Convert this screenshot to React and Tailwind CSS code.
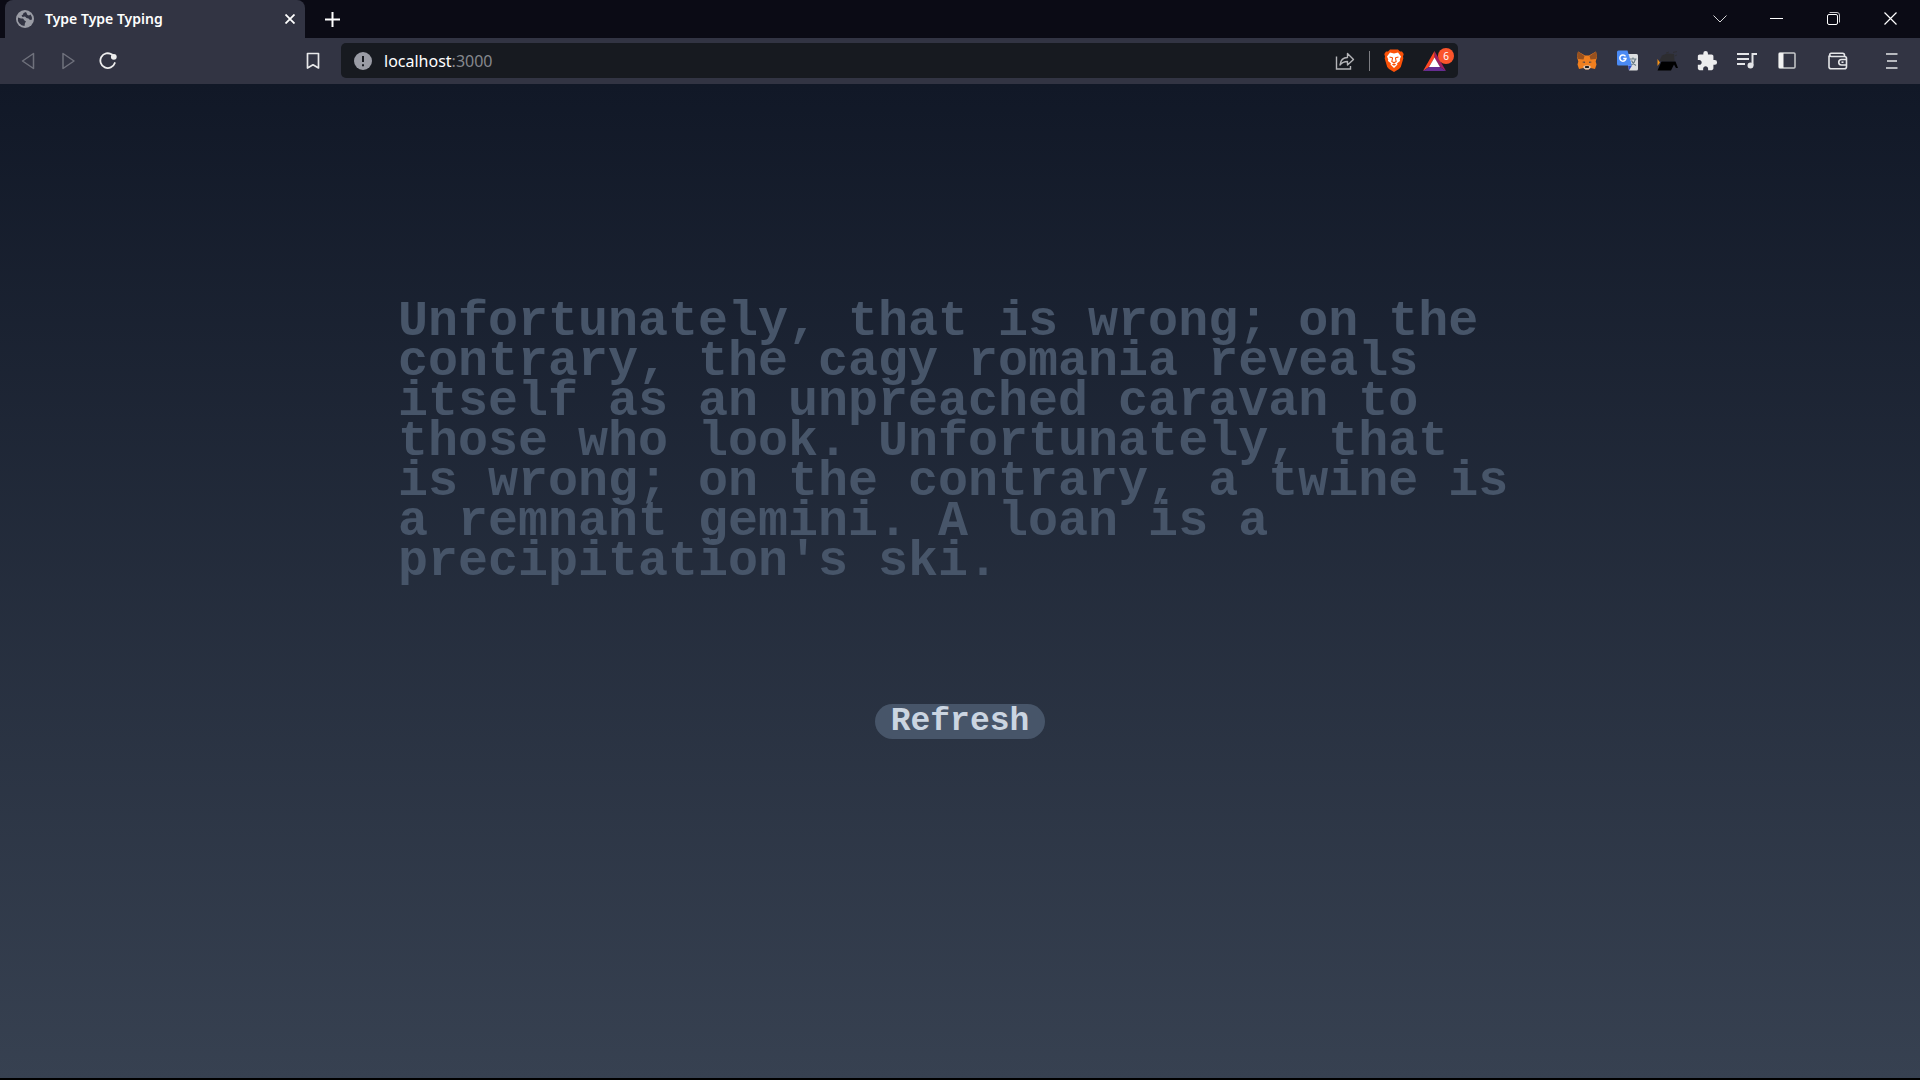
import React from 'react';

const PASSAGE =
  "Unfortunately, that is wrong; on the contrary, the cagy romania reveals itself as an unpreached caravan to those who look. Unfortunately, that is wrong; on the contrary, a twine is a remnant gemini. A loan is a precipitation's ski.";

const GlobeIcon = () => (
  <svg className="w-[18px] h-[18px] shrink-0" viewBox="0 0 18 18">
    <circle cx="9" cy="9" r="9" fill="#9a9ca5" />
    <path d="M2 7.500L5 8.500L7 8.500L8.500 10.500L10 11.500L9 13L8.500 16A7 7 0 0 1 2 7.500Z" fill="#323443" />
    <path d="M10 2L7.500 3L7 4.500L5.500 5.500L6.500 7L9 6.500L10.500 8L12.500 8.500L14 10L16 9.500A7 7 0 0 0 14.500 4.500L13 5.500L11.500 5Z" fill="#323443" />
  </svg>
);

const CloseTabIcon = () => (
  <svg className="w-[10px] h-[10px]" viewBox="0 0 10 10" stroke="#fff" strokeWidth="1.800">
    <path d="M0.500 0.500L9.500 9.500M9.500 0.500L0.500 9.500" />
  </svg>
);

const PlusIcon = () => (
  <svg className="w-[15px] h-[15px]" viewBox="0 0 15 15" stroke="#fff" strokeWidth="2">
    <path d="M7.500 0V15M0 7.500H15" />
  </svg>
);

const BackIcon = () => (
  <svg className="w-[18px] h-[18px]" viewBox="0 0 18 18" fill="none" stroke="#6f717c" strokeWidth="1.500" strokeLinejoin="round">
    <path d="M14.500 1.500V16.500L3.500 9Z" />
  </svg>
);

const ForwardIcon = () => (
  <svg className="w-[18px] h-[18px]" viewBox="0 0 18 18" fill="none" stroke="#6f717c" strokeWidth="1.500" strokeLinejoin="round">
    <path d="M4 1.500V16.500L15 9Z" />
  </svg>
);

const ReloadIcon = () => (
  <svg className="w-[18px] h-[18px]" viewBox="0 0 18 18" fill="none">
    <path d="M13 2.600A7.400 7.400 0 1 0 15.800 11" stroke="#eee" strokeWidth="1.800" strokeLinecap="round" />
    <circle cx="14.800" cy="4.800" r="2.900" fill="#eee" />
  </svg>
);

const BookmarkIcon = () => (
  <svg className="w-[14px] h-[18px]" viewBox="0 0 14 18" fill="none" stroke="#e8e8ea" strokeWidth="1.700" strokeLinejoin="round">
    <path d="M1.500 1.500H12.500V16L7 12.800L1.500 16Z" />
  </svg>
);

const InfoIcon = () => (
  <svg className="w-[18px] h-[18px]" viewBox="0 0 18 18">
    <circle cx="9" cy="9" r="9" fill="#9a9ca5" />
    <path d="M9 4V10M9 12.300V14.300" stroke="#171a20" strokeWidth="2" />
  </svg>
);

const ShareIcon = () => (
  <svg className="w-[20px] h-[18px]" viewBox="0 0 20 18" fill="none" stroke="#b4b5b8" strokeWidth="1.400">
    <path d="M1.500 4.500V17H15.500V14" />
    <path d="M5 13C5.500 8.500 8 5.500 12.500 5.500V1.500L18.500 7.500L12.500 13V9.500C9.500 9.500 7 10.500 5 13Z" strokeLinejoin="round" />
  </svg>
);

const BraveIcon = () => (
  <svg className="w-[20px] h-[23px]" viewBox="0 0 20 23">
    <path d="M6 0.500H14L16 2.500L18 2.500L19.700 5L19 7.500L19.300 9.500L16.800 18L15 20L10 23L5 20L3.200 18L0.700 9.500L1 7.500L0.300 5L2 2.500L4 2.500Z" fill="#fb5209" />
    <path d="M6 3.500L10 4.500L14 3.500L17 7.500L15.800 10.200L16 12L13 14.500L13.500 15.500L10 19L6.500 15.500L7 14.500L4 12L4.200 10.200L3 7.500Z" fill="#fff" />
    <path d="M5.500 8L8.300 8.700L8.500 9.500L7.800 12.500L10 13.800L12.200 12.500L11.500 9.500L11.700 8.700L14.500 8" fill="none" stroke="#fb5209" strokeWidth="1.100" />
    <path d="M7.800 15.500L10 14.600L12.200 15.500L10 16.800Z" fill="#fb5209" />
  </svg>
);

const RewardsIcon = () => (
  <svg className="w-[23px] h-[20px]" viewBox="0 0 23 20">
    <path d="M11.500 0L23 20L17 16L11.500 6.500Z" fill="#9e1f63" />
    <path d="M11.500 0L0 20L6 16L11.500 6.500Z" fill="#ff4724" />
    <path d="M0 20H23L17 16H6Z" fill="#662d91" />
    <path d="M11.500 6.500L17 16H6Z" fill="#fff" />
  </svg>
);

const FoxIcon = () => (
  <svg className="w-[20px] h-[19px]" viewBox="0 0 20 19">
    <path d="M1 0.500L8 4.500H12L19 0.500L20 6L18.700 10.500L19.500 13.500L18 18L13.500 17L11.500 18.500H8.500L6.500 17L2 18L0.500 13.500L1.300 10.500L0 6Z" fill="#f07f1f" />
    <path d="M1 0.500L7.500 5L6.500 8.500L1.300 8L0 6ZM19 0.500L12.500 5L13.500 8.500L18.700 8L20 6Z" fill="#96501f" />
    <path d="M5 11L7.600 10.400L8 12ZM15 11L12.400 10.400L12 12Z" fill="#2b3850" />
    <path d="M6.500 15L8.500 14.500H11.500L13.500 15L13.500 17L11.500 18.500H8.500L6.500 17Z" fill="#dbc9bb" />
    <path d="M8.200 15H11.800L12 17H8Z" fill="#1f1d1d" />
  </svg>
);

const TranslateIcon = () => (
  <svg className="w-[21px] h-[21px]" viewBox="0 0 21 21">
    <path d="M9 4H19.500A1.500 1.500 0 0 1 21 5.500V19A1.500 1.500 0 0 1 19.500 20.500H12Z" fill="#dcdee0" />
    <path d="M11 15.500H15L12 20.500Z" fill="#2a49c8" />
    <path d="M1.500 0.500H10.500L15 15.500H1.500A1.500 1.500 0 0 1 0 14V2A1.500 1.500 0 0 1 1.500 0.500Z" fill="#4a8af4" />
    <path d="M8.500 6.300A3.100 3.100 0 1 0 9 8.500H6.200" fill="none" stroke="#fff" strokeWidth="1.500" />
    <path d="M13 9H19.500M16 7.500V9M18.500 9C17.800 12 16 14 14.500 15M14.500 10.500C15.500 13 17 14.500 19 15.500" fill="none" stroke="#6b7d86" strokeWidth="1.200" />
  </svg>
);

const HatIcon = () => (
  <svg className="w-[21px] h-[20px]" viewBox="0 0 21 20">
    <path d="M2.500 9.500L5 4.500L10 2.500L17 3L17.500 10H2.500Z" fill="#2d2d30" />
    <path d="M9 2L12 1M16 1.500L20 0.500M17.500 5L20 4" stroke="#2d2d30" strokeWidth="0.800" />
    <path d="M4.500 10.500H18.500L21 17H19L17 13.500L14 19.500H0.500Z" fill="#000" />
    <path d="M0.500 8L3 11.500L0.500 15Z" fill="#f79316" />
  </svg>
);

const PuzzleIcon = () => (
  <svg className="w-[22px] h-[22px]" viewBox="0 0 24 24" fill="#ededee">
    <path d="M20.500 11H19V7c0-1.100-.9-2-2-2h-4V3.500a2.500 2.500 0 0 0-5 0V5H4c-1.100 0-1.990.9-1.990 2v3.800H3.500c1.490 0 2.700 1.210 2.700 2.700s-1.210 2.700-2.700 2.700H2V20c0 1.100.9 2 2 2h3.800v-1.500c0-1.490 1.210-2.700 2.700-2.700s2.700 1.210 2.700 2.700V22H17c1.100 0 2-.9 2-2v-4h1.500a2.500 2.500 0 0 0 0-5z" />
  </svg>
);

const PlaylistIcon = () => (
  <svg className="w-[20px] h-[17px]" viewBox="0 0 20 17" fill="none" stroke="#e4e5e8" strokeWidth="2">
    <path d="M0 2H12M0 7H12M0 12H8" />
    <path d="M15.500 13.500V2H20" />
    <circle cx="13.500" cy="13.500" r="2" fill="#e4e5e8" />
  </svg>
);

const SidebarIcon = () => (
  <svg className="w-[18px] h-[17px]" viewBox="0 0 18 17">
    <rect x="1" y="1" width="16" height="15" rx="1" fill="none" stroke="#c9cacd" strokeWidth="1.500" />
    <path d="M1 1H5.500V16H1Z" fill="#f2f2f2" />
  </svg>
);

const WalletIcon = () => (
  <svg className="w-[20px] h-[18px]" viewBox="0 0 20 18" fill="none" stroke="#e4e5e8" strokeWidth="1.600">
    <path d="M1 3.500V14.500A2 2 0 0 0 3 16.800H16.500A2 2 0 0 0 18.500 14.800V6.500A2 2 0 0 0 16.500 4.500H3A1.700 1.700 0 0 1 3 1.200H14.500A2 2 0 0 1 16.500 3.200V4.500" />
    <path d="M19 7.500H13.500A2.700 2.700 0 0 0 13.500 13H19" />
    <path d="M13.500 10.200H15.500" />
  </svg>
);

const MenuIcon = () => (
  <svg className="w-[12px] h-[16px]" viewBox="0 0 12 16" stroke="#e4e5e8" strokeWidth="1.500">
    <path d="M0 1H11.500M1 8H11M0 15H11.500" />
  </svg>
);

const ChevronIcon = () => (
  <svg className="w-[14px] h-[8px]" viewBox="0 0 14 8" fill="none" stroke="#d5d5d7">
    <path d="M0.500 0.500L7 7L13.500 0.500" />
  </svg>
);

const MinimizeIcon = () => (
  <svg className="w-[13px] h-[13px]" viewBox="0 0 13 13">
    <path d="M0 6H13V7H0Z" fill="#fff" />
  </svg>
);

const RestoreIcon = () => (
  <svg className="w-[13px] h-[13px]" viewBox="0 0 13 13" fill="none" stroke="#fff">
    <rect x="0.500" y="2.500" width="10" height="10" rx="1.500" />
    <path d="M2.500 0.500H10A2.500 2.500 0 0 1 12.500 3V10.500" stroke="#c5c5c8" />
  </svg>
);

const CloseWindowIcon = () => (
  <svg className="w-[13px] h-[13px]" viewBox="0 0 13 13" stroke="#fff" strokeWidth="1.200">
    <path d="M0.500 0.500L12.500 12.500M12.500 0.500L0.500 12.500" />
  </svg>
);

const IconButton = ({ label, className = 'w-10', children }) => (
  <button type="button" aria-label={label} className={`flex h-full shrink-0 items-center justify-center ${className}`}>
    {children}
  </button>
);

const TabStrip = () => (
  <div className="flex h-[38px] items-center bg-[#0b0b15] pl-[5px]">
    <div className="flex h-full w-[300px] items-center rounded-t-lg bg-[#323443] pl-[11px]">
      <GlobeIcon />
      <span className="ml-[11px] flex-1 font-['Noto_Sans',sans-serif] text-sm font-semibold text-white">Type Type Typing</span>
      <IconButton label="Close tab" className="w-[30px]"><CloseTabIcon /></IconButton>
    </div>
    <IconButton label="New tab" className="w-[54px]"><PlusIcon /></IconButton>
    <div className="ml-auto flex h-full pb-px pr-px">
      <IconButton label="Search tabs" className="w-[57px]"><ChevronIcon /></IconButton>
      <IconButton label="Minimize" className="w-[57px]"><MinimizeIcon /></IconButton>
      <IconButton label="Restore" className="w-[57px]"><RestoreIcon /></IconButton>
      <IconButton label="Close" className="w-[57px]"><CloseWindowIcon /></IconButton>
    </div>
  </div>
);

const AddressBar = () => (
  <div className="mr-[109px] flex h-[35px] flex-1 items-center rounded-[5px] bg-[#171a20] pl-[13px] pr-3">
    <InfoIcon />
    <a href="#root" className="ml-3 flex-1 font-['Noto_Sans',sans-serif] text-base text-white">
      localhost<span className="text-[#85878d]">:3000</span>
    </a>
    <IconButton label="Share" className="w-5"><ShareIcon /></IconButton>
    <span className="ml-[14px] h-5 w-px bg-[#7c7d82]" />
    <IconButton label="Brave Shields" className="ml-[14px] w-5"><BraveIcon /></IconButton>
    <div className="relative ml-[18px] flex h-full items-center">
      <IconButton label="Brave Rewards" className="w-6"><RewardsIcon /></IconButton>
      <span className="absolute -right-2 top-[5px] flex size-4 items-center justify-center rounded-full bg-[#fb542b] font-['Noto_Sans',sans-serif] text-[10px] text-white">
        6
      </span>
    </div>
  </div>
);

const Toolbar = () => (
  <div className="flex h-[46px] items-center bg-[#323443] pb-px pl-2 pr-[5px]">
    <IconButton label="Back"><BackIcon /></IconButton>
    <IconButton label="Forward"><ForwardIcon /></IconButton>
    <IconButton label="Reload"><ReloadIcon /></IconButton>
    <IconButton label="Bookmark this page" className="ml-[157px] w-14"><BookmarkIcon /></IconButton>
    <AddressBar />
    <div className="flex h-full">
      <IconButton label="MetaMask"><FoxIcon /></IconButton>
      <IconButton label="Translate"><TranslateIcon /></IconButton>
      <IconButton label="Extension"><HatIcon /></IconButton>
      <IconButton label="Extensions"><PuzzleIcon /></IconButton>
      <IconButton label="Media controls"><PlaylistIcon /></IconButton>
      <IconButton label="Sidebar"><SidebarIcon /></IconButton>
      <IconButton label="Wallet" className="w-[62px]"><WalletIcon /></IconButton>
      <IconButton label="Menu" className="w-[46px]"><MenuIcon /></IconButton>
    </div>
  </div>
);

export default function App() {
  return (
    <div className="flex min-h-screen flex-col border-b-2 border-black">
      <header>
        <TabStrip />
        <Toolbar />
      </header>
      <main className="flex flex-1 flex-col items-center bg-linear-to-b/srgb from-[#111827] to-[#374151] pt-[218px]">
        <p className="w-full max-w-[1124px] font-['Liberation_Mono',monospace] text-[50px] font-bold leading-10 text-[#475569]">
          {PASSAGE}
        </p>
        <button
          type="button"
          className="mt-[122px] h-[35px] rounded-full bg-[#475569] px-4 font-['Liberation_Mono',monospace] text-[33px] font-bold leading-[35px] text-[#cbd5e1]"
        >
          Refresh
        </button>
      </main>
    </div>
  );
}
